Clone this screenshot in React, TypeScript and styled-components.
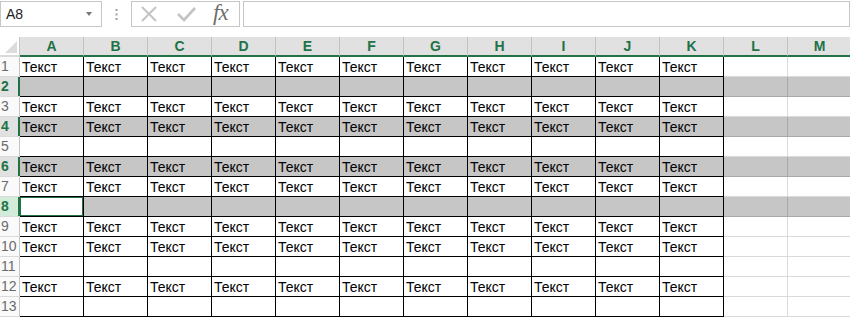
import React from "react";
import styled, { createGlobalStyle } from "styled-components";

const GREEN = "#217346";

const GlobalStyle = createGlobalStyle`
  html, body {
    margin: 0;
    padding: 0;
    background: #fff;
    font-family: "Liberation Sans", Arial, sans-serif;
    overflow: hidden;
  }
`;

const Page = styled.div`
  width: 850px;
  height: 319px;
  overflow: hidden;
  background: #fff;
`;

const FormulaBar = styled.div`
  display: flex;
  height: 26px;
  margin-top: 1px;
  margin-bottom: 10px;
`;

const NameBox = styled.div`
  box-sizing: border-box;
  width: 102px;
  border: 1px solid #c6c6c6;
  display: flex;
  align-items: center;
  justify-content: space-between;
  padding: 0 9px 0 5px;
  font-size: 14px;
  color: #222;
`;

const Caret = styled.span`
  width: 0;
  height: 0;
  border-left: 3.5px solid transparent;
  border-right: 3.5px solid transparent;
  border-top: 4px solid #777;
`;

const Grip = styled.div`
  width: 29px;
  display: flex;
  align-items: center;
  justify-content: center;
`;

const FxBox = styled.div`
  box-sizing: border-box;
  width: 109px;
  border: 1px solid #c6c6c6;
  display: flex;
  align-items: center;
  gap: 19px;
  padding-left: 8px;
`;

const Fx = styled.span`
  font-family: "Liberation Serif", "Times New Roman", serif;
  font-style: italic;
  font-size: 23px;
  color: #6e6e6e;
  letter-spacing: -1px;
  margin-top: -3px;
  margin-left: -2px;
`;

const FormulaInput = styled.div`
  box-sizing: border-box;
  flex: 1;
  margin-left: 3px;
  border: 1px solid #c6c6c6;
`;

const Sheet = styled.div`
  display: grid;
  grid-template-columns: 20px repeat(13, 64px);
  grid-auto-rows: 20px;
`;

const Corner = styled.div`
  box-sizing: border-box;
  background: #fff;
  border-right: 1px solid #c6c6c6;
  border-bottom: 2px solid #dadada;
  display: flex;
  align-items: flex-end;
  justify-content: flex-end;
  padding: 0 2px 2px 0;
`;

const CornerTriangle = styled.span`
  width: 0;
  height: 0;
  border-left: 12px solid transparent;
  border-bottom: 12px solid #dcdcdc;
`;

const ColHeader = styled.div`
  box-sizing: border-box;
  background: #e1e1e1;
  border-right: 1px solid #c2c2c2;
  border-bottom: 2px solid ${GREEN};
  color: ${GREEN};
  font-weight: bold;
  font-size: 14px;
  line-height: 18px;
  text-align: center;
`;

const RowHeader = styled.div<{ $selected: boolean; $active: boolean }>`
  box-sizing: border-box;
  background: ${(p) => (p.$active ? "#d3ebd9" : p.$selected ? "#e1e1e1" : "#fafafa")};
  border-bottom: 1px solid #dadada;
  box-shadow: inset ${(p) => (p.$selected ? `-2px 0 0 ${GREEN}` : "-1px 0 0 #c6c6c6")};
  color: ${(p) => (p.$selected ? GREEN : "#6a6a6a")};
  font-weight: ${(p) => (p.$selected ? "bold" : "normal")};
  font-size: 14px;
  line-height: 19px;
  padding-left: 1px;
`;

const Cell = styled.div<{ $bordered: boolean; $shaded: boolean; $active: boolean }>`
  box-sizing: border-box;
  background: ${(p) => (p.$shaded && !p.$active ? "#c6c6c6" : "#fff")};
  border-right: 1px solid
    ${(p) => (p.$bordered ? "#000" : p.$shaded ? "#a8a8a8" : "#dadada")};
  border-bottom: 1px solid
    ${(p) => (p.$bordered ? "#000" : p.$shaded ? "#a8a8a8" : "#dadada")};
  box-shadow: ${(p) => (p.$active ? `inset 0 0 0 1px ${GREEN}` : "none")};
  font-size: 14px;
  line-height: 17px;
  padding: 2px 0 0 2px;
  color: #000;
  white-space: nowrap;
  overflow: hidden;
`;

const COLS = ["A", "B", "C", "D", "E", "F", "G", "H", "I", "J", "K", "L", "M"];
const TEXT_ROWS = [1, 3, 4, 6, 7, 9, 10, 12];
const SHADED_ROWS = [2, 4, 6, 8];
const ACTIVE_ROW = 8;

const CrossIcon = () => (
  <svg width="18" height="18" viewBox="0 0 18 18">
    <path d="M2 2 L16 16 M16 2 L2 16" stroke="#c4c4c4" strokeWidth="2" fill="none" />
  </svg>
);

const CheckIcon = () => (
  <svg width="19" height="16" viewBox="0 0 19 16">
    <path d="M1 8 L7 14 L18 2" stroke="#c4c4c4" strokeWidth="2.6" fill="none" />
  </svg>
);

const GripDots = () => (
  <svg width="3" height="11" viewBox="0 0 3 11">
    <rect x="0.5" y="0" width="2" height="2" fill="#a0a0a0" />
    <rect x="0.5" y="4.5" width="2" height="2" fill="#a0a0a0" />
    <rect x="0.5" y="9" width="2" height="2" fill="#a0a0a0" />
  </svg>
);

export default function App() {
  const rows = Array.from({ length: 13 }, (_, i) => i + 1);
  return (
    <Page>
      <GlobalStyle />
      <FormulaBar>
        <NameBox>
          <span>A8</span>
          <Caret />
        </NameBox>
        <Grip>
          <GripDots />
        </Grip>
        <FxBox>
          <CrossIcon />
          <CheckIcon />
          <Fx>fx</Fx>
        </FxBox>
        <FormulaInput />
      </FormulaBar>
      <Sheet>
        <Corner>
          <CornerTriangle />
        </Corner>
        {COLS.map((c) => (
          <ColHeader key={c}>{c}</ColHeader>
        ))}
        {rows.map((r) => {
          const shaded = SHADED_ROWS.includes(r);
          const hasText = TEXT_ROWS.includes(r);
          return (
            <React.Fragment key={r}>
              <RowHeader $selected={shaded} $active={r === ACTIVE_ROW}>
                {r}
              </RowHeader>
              {COLS.map((c, j) => {
                const bordered = j < 11;
                return (
                  <Cell
                    key={c}
                    $bordered={bordered}
                    $shaded={shaded}
                    $active={r === ACTIVE_ROW && j === 0}
                  >
                    {bordered && hasText ? "Текст" : ""}
                  </Cell>
                );
              })}
            </React.Fragment>
          );
        })}
      </Sheet>
    </Page>
  );
}
